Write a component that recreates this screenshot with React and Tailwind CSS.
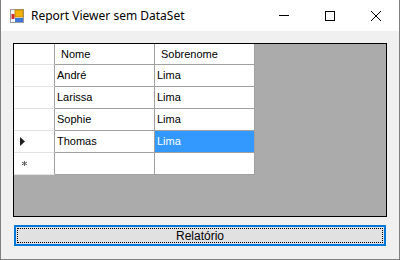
import React from 'react';

const rows = [
  { nome: 'André', sobrenome: 'Lima' },
  { nome: 'Larissa', sobrenome: 'Lima' },
  { nome: 'Sophie', sobrenome: 'Lima' },
  { nome: 'Thomas', sobrenome: 'Lima', current: true },
];

const FormIcon = () => (
  <svg width="14" height="14" viewBox="0 0 14 14" className="shrink-0">
    <rect x="0.5" y="0.5" width="13" height="13" fill="#f4f4f4" stroke="#9a9a9a" />
    <rect x="5" y="1" width="8" height="7" fill="#f2b400" stroke="#c08000" strokeWidth="0.8" />
    <rect x="1.5" y="5" width="3" height="5" fill="#d03030" />
    <rect x="5" y="9" width="8" height="4" fill="#3c78d8" />
  </svg>
);

const TitleBar = () => (
  <div className="flex h-[31px] items-center bg-white">
    <div className="ml-[9px] flex items-center gap-[7px]">
      <FormIcon />
      <span className="text-[12px] text-black" style={{ fontFamily: '"Noto Sans", "Liberation Sans", sans-serif' }}>
        Report Viewer sem DataSet
      </span>
    </div>
    <div className="ml-auto flex h-full items-center">
      <div className="flex h-full w-[46px] items-center justify-center">
        <div className="h-px w-[10px] bg-black" />
      </div>
      <div className="flex h-full w-[46px] items-center justify-center">
        <div className="h-[10px] w-[10px] border border-black" />
      </div>
      <div className="flex h-full w-[46px] items-center justify-center">
        <svg width="10" height="10" viewBox="0 0 10 10">
          <path d="M0 0 L10 10 M10 0 L0 10" stroke="#000" strokeWidth="1" />
        </svg>
      </div>
    </div>
  </div>
);

const Cell = ({ children, className = '' }) => (
  <div className={`flex w-[100px] items-center border-r border-b border-[#a0a0a0] pl-[2px] ${className}`}>
    {children}
  </div>
);

const RowHead = ({ children, className = '' }) => (
  <div className={`flex w-[41px] items-center border-r border-b border-r-[#a0a0a0] border-b-[#e3e3e3] bg-white ${className}`}>
    {children}
  </div>
);

const Grid = () => (
  <div className="h-[174px] w-[374px] border border-black bg-[#ababab]">
    <div className="flex h-[21px]">
      <RowHead />
      <Cell className="bg-white pl-[6px]">Nome</Cell>
      <Cell className="bg-white pl-[6px]">Sobrenome</Cell>
    </div>
    {rows.map((r) => (
      <div key={r.nome} className="flex h-[22px]">
        <RowHead className="pl-[6px]">
          {r.current && (
            <svg width="5" height="9" viewBox="0 0 5 9">
              <path d="M0 0 L5 4.5 L0 9 Z" fill="#202020" />
            </svg>
          )}
        </RowHead>
        <Cell className="bg-white">{r.nome}</Cell>
        <Cell className={r.current ? 'bg-[#3399ff] text-white' : 'bg-white'}>{r.sobrenome}</Cell>
      </div>
    ))}
    <div className="flex h-[22px]">
      <RowHead className="pl-[8px]">
        <svg width="5" height="5" viewBox="0 0 5 5">
          <path d="M2.5 0 V5 M0 1.2 L5 3.8 M0 3.8 L5 1.2" stroke="#606060" strokeWidth="1" />
        </svg>
      </RowHead>
      <Cell className="bg-white" />
      <Cell className="bg-white" />
    </div>
  </div>
);

export default function App() {
  return (
    <div
      className="flex h-[260px] w-[400px] flex-col border-x border-b border-[#808080] text-[11px] text-black"
      style={{ fontFamily: '"Liberation Sans", Arial, sans-serif' }}
    >
      <TitleBar />
      <div className="flex flex-1 flex-col bg-[#f0f0f0] pl-[12px] pt-[12px]">
        <Grid />
        <button className="mt-[8px] ml-px h-[21px] w-[372px] border-2 border-[#0078d7] bg-[#e1e1e1] p-px">
          <div className="flex h-full w-full items-center justify-center border border-dotted border-black text-[12px]">
            Relatório
          </div>
        </button>
      </div>
    </div>
  );
}
